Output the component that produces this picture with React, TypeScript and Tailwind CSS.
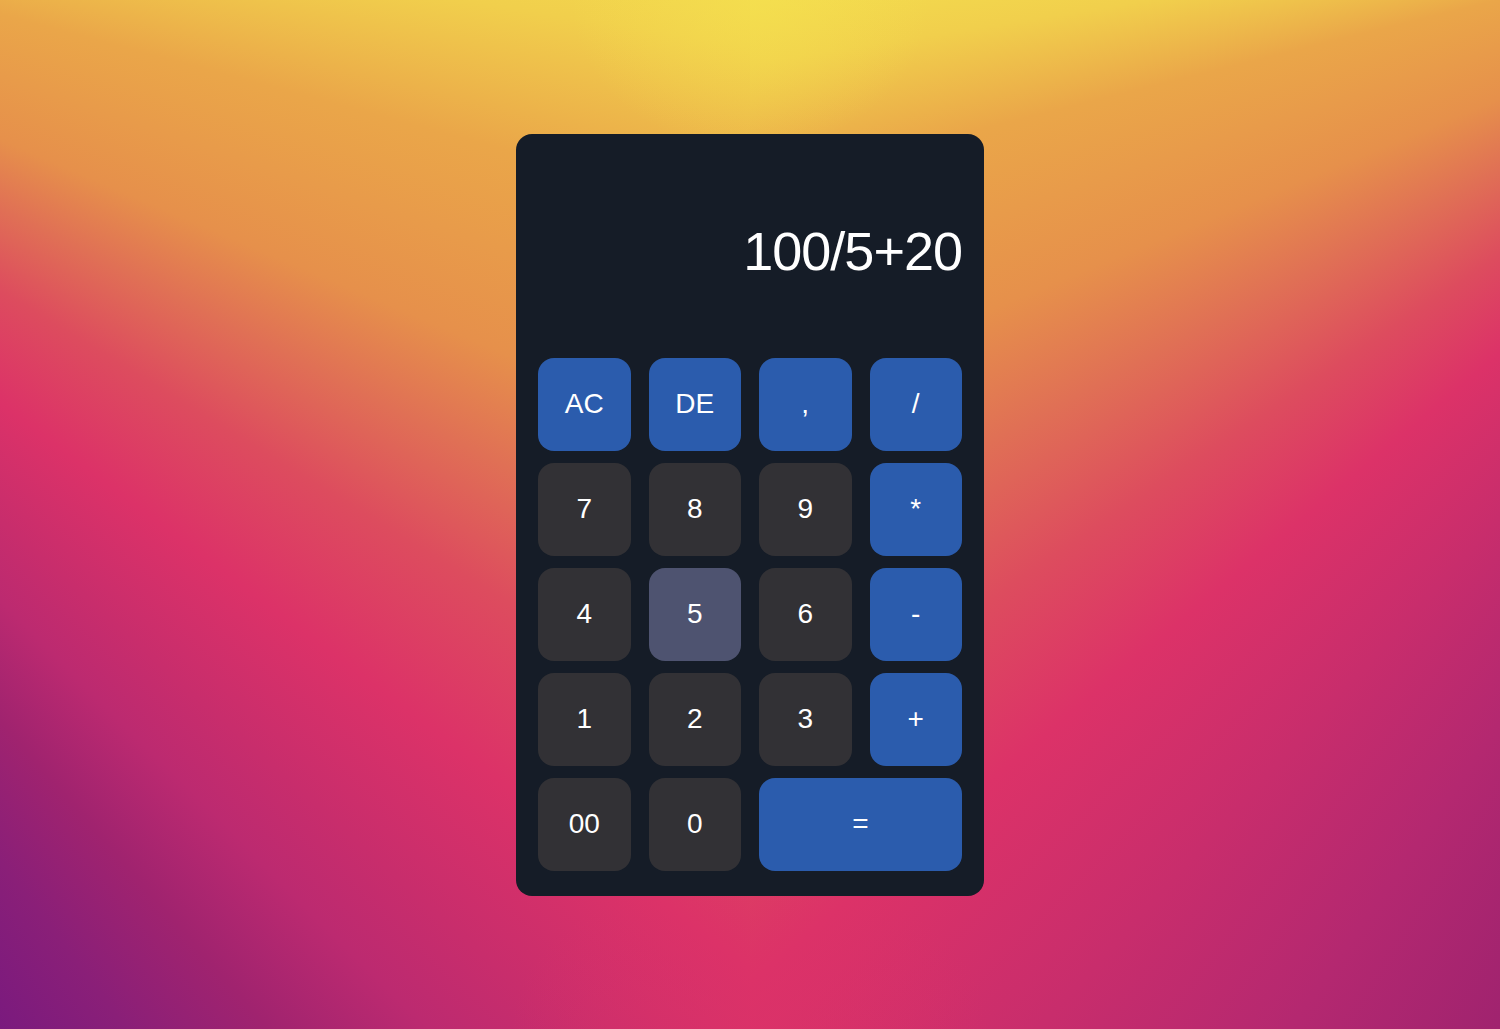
import React from "react";

type Key = {
  label: string;
  kind: "op" | "num" | "active";
  wide?: boolean;
};

const keys: Key[] = [
  { label: "AC", kind: "op" },
  { label: "DE", kind: "op" },
  { label: ",", kind: "op" },
  { label: "/", kind: "op" },
  { label: "7", kind: "num" },
  { label: "8", kind: "num" },
  { label: "9", kind: "num" },
  { label: "*", kind: "op" },
  { label: "4", kind: "num" },
  { label: "5", kind: "active" },
  { label: "6", kind: "num" },
  { label: "-", kind: "op" },
  { label: "1", kind: "num" },
  { label: "2", kind: "num" },
  { label: "3", kind: "num" },
  { label: "+", kind: "op" },
  { label: "00", kind: "num" },
  { label: "0", kind: "num" },
  { label: "=", kind: "op", wide: true },
];

const kindClass = {
  op: "bg-[#2b5cad]",
  num: "bg-[#323135]",
  active: "bg-[#4e5370]",
};

// two fanned halves give the V-shaped sunset blend, soft glows hide the seam
const App = () => {
  return (
    <div className="w-full min-h-screen flex items-center justify-center bg-[#dc3268] bg-no-repeat bg-[length:100%_100%,100%_100%,50%_100%,50%_100%] bg-[position:center_top,center_bottom,left_top,right_top] bg-[image:radial-gradient(ellipse_180px_150px_at_50%_0%,rgba(245,227,79,0.55),rgba(245,227,79,0)),radial-gradient(ellipse_240px_160px_at_50%_100%,rgba(220,50,104,0.6),rgba(220,50,104,0)),conic-gradient(from_0deg_at_-800px_-200px,#f5e34f_94deg,#f1cf4c_99deg,#eaa649_105deg,#e6904b_113deg,#e07055_117deg,#dd4c5e_121.5deg,#dc3268_127deg,#c82d6c_132deg,#bc2a70_135deg,#a0236f_139deg,#8a1f78_143deg,#7a1a7e_147deg),conic-gradient(from_0deg_at_1350px_-150px,#9c2270_205deg,#a0236f_207deg,#b42870_214.5deg,#c82d6c_222deg,#dc3268_230deg,#dd4c5e_236deg,#e07055_242deg,#e6904b_247.5deg,#eaa649_256deg,#f1cf4c_261deg,#f5e34f_266deg)] font-['Liberation_Sans',Arial,sans-serif]">
      <div className="w-[468px] h-[762px] rounded-2xl bg-[#151c27] px-[22px] pt-[22px] pb-[25px] flex flex-col">
        <div className="h-[190px] mb-3 flex items-center justify-end">
          <p className="text-white text-[54px] leading-none tracking-[-1px]">
            100/5+20
          </p>
        </div>
        <div className="grid grid-cols-4 gap-x-[18px] gap-y-3">
          {keys.map((key) => (
            <button
              key={key.label}
              className={`${kindClass[key.kind]} ${
                key.wide ? "col-span-2" : ""
              } h-[93px] rounded-2xl text-white text-[28px] flex items-center justify-center`}
            >
              {key.label}
            </button>
          ))}
        </div>
      </div>
    </div>
  );
};

export default App;
